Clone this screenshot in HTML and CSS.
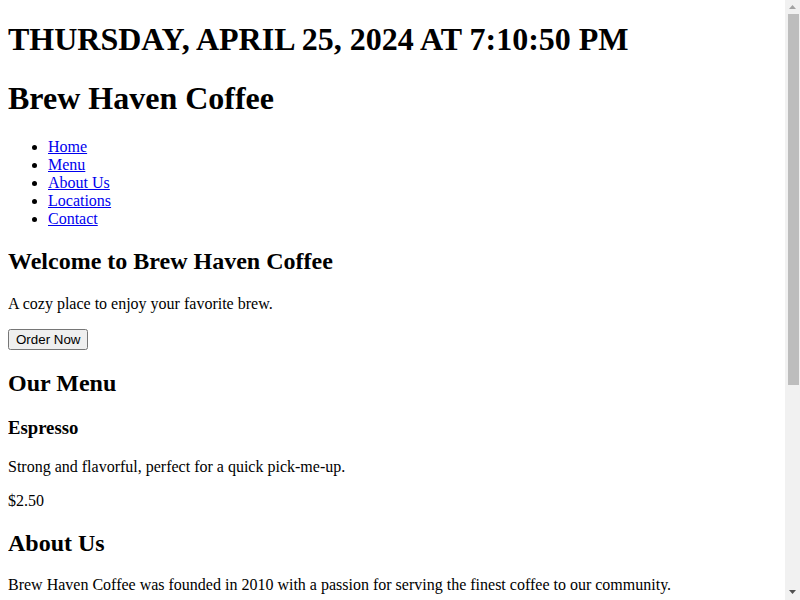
FILE: index.html
```html
<!DOCTYPE html>
<html lang="en">
<head>
<meta charset="utf-8">
<title>Brew Haven Coffee</title>
<link rel="stylesheet" href="styles.css">
</head>
<body>
<header class="site-header">
  <h1 class="datetime">THURSDAY, APRIL 25, 2024 AT 7:10:50 PM</h1>
  <h1 class="brand">Brew Haven Coffee</h1>
  <nav>
    <ul class="nav-list">
      <li><a href="#">Home</a></li>
      <li><a href="#">Menu</a></li>
      <li><a href="#">About Us</a></li>
      <li><a href="#">Locations</a></li>
      <li><a href="#">Contact</a></li>
    </ul>
  </nav>
</header>
<main>
  <section class="hero">
    <h2>Welcome to Brew Haven Coffee</h2>
    <p>A cozy place to enjoy your favorite brew.</p>
    <button class="order-btn" type="button">Order Now</button>
  </section>
  <section class="menu">
    <h2>Our Menu</h2>
    <div class="menu-item">
      <h3>Espresso</h3>
      <p>Strong and flavorful, perfect for a quick pick-me-up.</p>
      <p>$2.50</p>
    </div>
  </section>
  <section class="about">
    <h2>About Us</h2>
    <p>Brew Haven Coffee was founded in 2010 with a passion for serving the finest coffee to our community.</p>
  </section>
  <section class="locations">
    <h2>Our Locations</h2>
    <p>123 Main Street, Springfield</p>
    <p>456 Oak Avenue, Riverside</p>
  </section>
  <section class="contact">
    <h2>Contact Us</h2>
    <p>Email: hello@brewhaven.com</p>
    <p>Phone: (555) 123-4567</p>
  </section>
</main>
<footer>
  <p>&copy; 2024 Brew Haven Coffee. All rights reserved.</p>
</footer>
<div class="fake-scrollbar" aria-hidden="true">
  <svg class="sb-arrow" width="15" height="14" viewBox="0 0 15 14"><polygon points="4,9 11,9 7.5,5" fill="#a3a3a3"/></svg>
  <div class="sb-thumb"></div>
  <div class="sb-space"></div>
  <svg class="sb-arrow" width="15" height="15" viewBox="0 0 15 15"><polygon points="4,5 11,5 7.5,9" fill="#505050"/></svg>
</div>
</body>
</html>
```

FILE: styles.css
```css
html {
  overflow-y: scroll;
}

body {
  margin: 0 8px 8px;
  font-family: "Liberation Serif", "Times New Roman", serif;
  color: #000;
  background: #fff;
}

.order-btn {
  font-family: "Liberation Sans", Arial, sans-serif;
  font-size: 13.333px;
}

.fake-scrollbar {
  position: fixed;
  top: 0;
  right: 0;
  width: 15px;
  height: 100vh;
  background: #f1f1f1;
  display: flex;
  flex-direction: column;
  align-items: center;
}

.sb-arrow {
  display: block;
  flex: none;
}

.sb-thumb {
  flex: none;
  width: 11px;
  height: 371px;
  margin-left: 1px;
  background: #bdbdbd;
}

.sb-space {
  flex: 1;
}
```
